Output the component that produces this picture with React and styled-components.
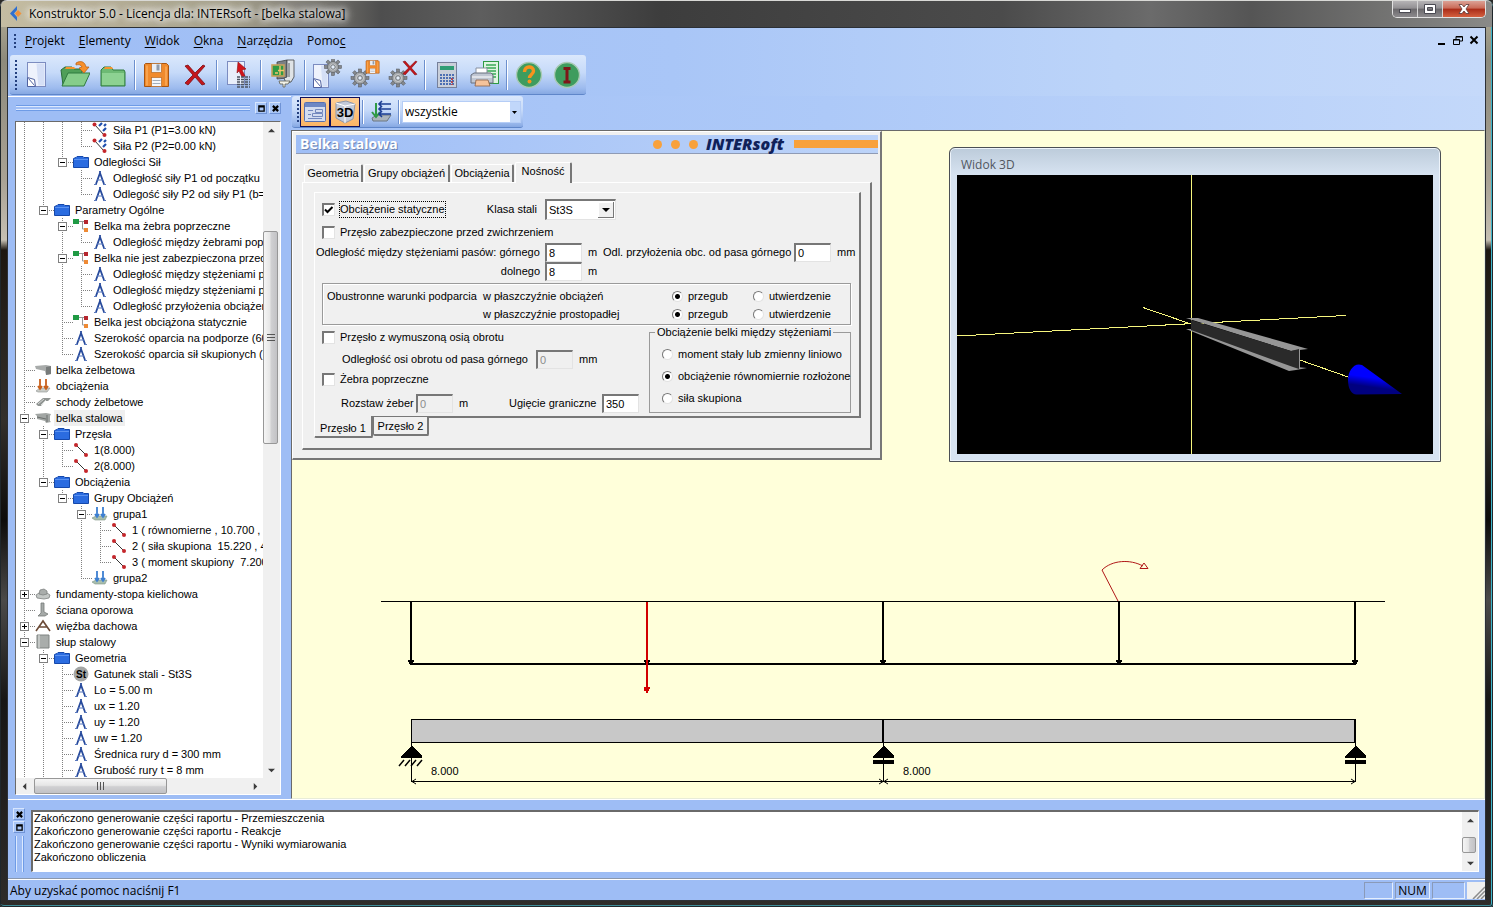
import React, { useState } from 'react';
import styled, { createGlobalStyle, css } from 'styled-components';

const GlobalStyle = createGlobalStyle`
  * { box-sizing: border-box; }
  body { margin: 0; background: #2b2a28; }
  button, input, select { font: inherit; color: inherit; margin: 0; }
`;

const uiFont = css`
  font-family: 'Open Sans', 'Noto Sans', sans-serif;
  font-size: 12px;
`;

const smallFont = css`
  font-family: 'Liberation Sans', Arial, sans-serif;
  font-size: 11px;
  line-height: 13px;
`;

/* ---------- window frame ---------- */

const Frame = styled.div`
  min-height: 100vh;
  display: flex;
  flex-direction: column;
  padding: 0 7px 6px 7px;
  color: #000;
  border-radius: 7px 7px 4px 4px;
  box-shadow: inset 0 0 0 1px #20272b, inset -2px 0 0 #3fb6cb, inset 0 -2px 0 #3e8c98, inset 0 2px 0 #d8d8d0;
  background: linear-gradient(180deg, #b9b29a 0, #8d8a7c 60px, #a9a294 180px, #c5bfb2 240px, #1d1711 250px, #33302c 420px, #0d0c0b 520px, #4b4a49 600px, #171615 700px, #2e2c2a 100%);
  ${uiFont}
`;

const TitleBar = styled.header`
  height: 27px;
  margin: 0 -6px;
  padding: 0 6px 0 8px;
  display: flex;
  align-items: flex-start;
  gap: 6px;
  border-radius: 6px 6px 0 0;
  border-top: 1px solid #d9d9d6;
  background: linear-gradient(90deg, #c5bda2 0, #b3ac94 120px, #a5a08c 230px, #7d7b74 310px, #4e4e4e 380px, #5e5e5e 480px, #3d3d3d 660px, #4b4b4b 1000px, #6b6b6b 1150px, #555 1250px, #8a8a88 100%);
`;

const TitleText = styled.h1`
  flex: 1;
  margin: 0;
  font-size: 12px;
  font-weight: 400;
  line-height: 25px;
  white-space: nowrap;
  text-shadow: 0 0 6px #fff, 0 0 8px #fff, 0 0 10px #eee, 0 0 12px #ddd;
`;

const LogoBox = styled.span`
  display: flex;
  padding-top: 5px;
`;

const Captions = styled.div`
  display: flex;
  height: 17px;
  border: 1px solid #e2e2e2;
  border-top: 0;
  border-radius: 0 0 5px 5px;
  overflow: hidden;
`;

const CaptionButton = styled.button`
  width: ${(p) => (p.$close ? 42 : 25)}px;
  padding: 0;
  border: 0;
  border-right: ${(p) => (p.$close ? 0 : '1px solid #d5d5d5')};
  display: flex;
  align-items: center;
  justify-content: center;
  background: ${(p) =>
    p.$close
      ? 'linear-gradient(180deg, #dba195 0, #c96a57 45%, #a92c18 50%, #d4603f 100%)'
      : 'linear-gradient(180deg, #b5b3b5 0, #929093 45%, #6a686b 50%, #8c8a8d 100%)'};
`;

const Client = styled.div`
  flex: 1;
  display: flex;
  flex-direction: column;
  border: 1px solid #2c3036;
  background: #9ebdf5;
`;

const TopArea = styled.div`
  background: linear-gradient(90deg, #9ebdf5 0, #a9c6f7 45%, #bcd4f9 75%, #c5d9fa 100%);
`;

const MenuBar = styled.nav`
  height: 26px;
  display: flex;
  align-items: center;
  padding: 0 4px 0 6px;
  gap: 14px;
`;

const Grip = styled.span`
  width: 2px;
  height: ${(p) => p.$h}px;
  flex: none;
  margin-right: 1px;
  background: repeating-linear-gradient(180deg, #24407e 0 2px, transparent 2px 4px);
`;

const MenuItem = styled.button`
  padding: 0;
  border: 0;
  background: none;
  line-height: 18px;
  u { text-underline-offset: 2px; }
  &:first-of-type { margin-left: -6px; }
`;

const MdiButtons = styled.div`
  margin: 0 0 3px auto;
  display: flex;
  gap: 2px;
`;

const MdiButton = styled.button`
  width: 14px;
  height: 14px;
  padding: 0;
  border: 0;
  background: none;
  display: flex;
  align-items: center;
  justify-content: center;
`;

const ToolRow = styled.div`
  height: 42px;
  padding: 1px 2px 0;
`;

const ToolStrip = styled.div`
  display: inline-flex;
  align-items: center;
  height: ${(p) => p.$h}px;
  padding-left: 5px;
  border-radius: 3px;
  border-bottom: 1px solid #5f86c9;
  background: linear-gradient(180deg, #dbe8fc 0, #c6daf9 45%, #9dbbee 85%, #86a8e2 100%);
`;

const ToolButton = styled.button`
  width: 38px;
  height: 34px;
  padding: 0;
  border: 0;
  background: none;
  display: flex;
  align-items: center;
  justify-content: center;
`;

const ToolSep = styled.span`
  width: 2px;
  height: ${(p) => p.$h}px;
  margin: 0 2px;
  background: linear-gradient(90deg, #6c8fce 50%, #fff 50%);
`;

/* ---------- left tree ---------- */

const Main = styled.div`
  flex: 1;
  display: flex;
`;

const Sidebar = styled.aside`
  width: 283px;
  flex: none;
  padding: 4px 10px 3px 7px;
  border-top: 1px solid #fff;
  display: flex;
  flex-direction: column;
`;

const PanelHead = styled.div`
  height: 20px;
  padding: 0 0 6px 1px;
  display: flex;
  align-items: center;
  gap: 2px;
`;

const DragLines = styled.span`
  flex: 1;
  height: 6px;
  margin-right: 3px;
  border: solid #6e9be6;
  border-width: 1px 0;
  box-shadow: inset 0 1px 0 #dce9ff, inset 0 -1px 0 #dce9ff;
`;

const MiniButton = styled.button`
  width: 12px;
  height: 12px;
  padding: 0;
  display: flex;
  align-items: center;
  justify-content: center;
  border: 1px solid;
  border-color: #d7e5fd #6f93d6 #6f93d6 #d7e5fd;
  background: #a9c6f7;
`;

const TreeBox = styled.div`
  border: 1px solid;
  border-color: #6a6a6a #fff #fff #6a6a6a;
  background: #fff;
  display: grid;
  grid-template-columns: 1fr 17px;
  grid-template-rows: 1fr 16px;
`;

const TreeView = styled.ul`
  margin: 0;
  padding: 0;
  list-style: none;
  overflow: hidden;
  min-width: 0;
  ${smallFont}
`;

const TreeRow = styled.li`
  display: flex;
  align-items: center;
  height: 16px;
  white-space: pre;
  svg { flex: none; display: block; }
`;

const Expander = styled.button`
  width: 19px;
  height: 16px;
  flex: none;
  padding: 0;
  border: 0;
  background: none;
`;

const TreeLabel = styled.span`
  margin-left: 3px;
  padding: 2px 2px 1px;
  background: ${(p) => (p.$on ? '#efefef' : 'transparent')};
`;

const ScrollBar = styled.div`
  display: flex;
  flex-direction: ${(p) => (p.$row ? 'row' : 'column')};
  background: #f0f0f0;
`;

const ScrollArrow = styled.button`
  width: 16px;
  height: 16px;
  flex: none;
  padding: 0;
  border: 0;
  background: none;
  display: flex;
  align-items: center;
  justify-content: center;
`;

const Space = styled.span`
  flex: ${(p) => p.$grow} 0 0;
`;

const Thumb = styled.span`
  flex: ${(p) => p.$grow} 0 0;
  display: flex;
  align-items: center;
  justify-content: center;
  margin: ${(p) => (p.$row ? '0' : '0 2px 0 0')};
  border: 1px solid #979797;
  border-radius: 2px;
  background: linear-gradient(${(p) => (p.$row ? 180 : 90)}deg, #f5f5f5 0, #e6e6e6 45%, #d0d0d2 55%, #c2c2c5 100%);
`;

/* ---------- workspace ---------- */

const Work = styled.section`
  flex: 1;
  min-width: 0;
  display: flex;
  flex-direction: column;
`;

const SubTools = styled.div`
  height: 34px;
  padding: 0 3px 0 1px;
  background: linear-gradient(90deg, #a3c1f6 0, #adc9f8 45%, #c3d8fa 100%);
`;

const FlagButton = styled.button`
  width: 30px;
  height: 30px;
  padding: 0;
  display: flex;
  align-items: center;
  justify-content: center;
  border: ${(p) => (p.$on ? '1px solid #10105c' : '0')};
  background: ${(p) => (p.$on ? 'linear-gradient(180deg, #ffcf94 0, #fcb565 100%)' : 'none')};
`;

const Combo = styled.span`
  position: relative;
  display: inline-flex;
  svg { position: absolute; pointer-events: none; }
`;

const FilterCombo = styled(Combo)`
  margin-right: 2px;
  select {
    appearance: none;
    width: 119px;
    height: 22px;
    padding: 0 14px 0 2px;
    border: 1px solid #b5cdf6;
    border-radius: 0;
    background: linear-gradient(90deg, transparent 107px, #c1d7fa 107px) #fff;
    ${uiFont}
  }
  svg { right: 4px; top: 10px; }
`;

const Canvas = styled.div`
  flex: 1;
  border: 1px solid;
  border-color: #6a6a6a #e8ecd8 #e8ecd8 #6a6a6a;
  background: #ffffda;
`;

const Floating = styled.div`
  display: flex;
  justify-content: space-between;
  align-items: flex-start;
`;

const Dialog = styled.form`
  width: 590px;
  flex: none;
  padding: 3px 2px 8px 3px;
  border: solid;
  border-width: 1px 2px 2px 1px;
  border-color: #fff #777 #777 #fff;
  background: #f0f0f0;
  ${smallFont}
`;

const DialogTitle = styled.div`
  height: 19px;
  display: flex;
  align-items: center;
  padding-left: 4px;
  border-bottom: 1px solid #8f9bb5;
  background: linear-gradient(90deg, #9fbef6 0, #bcd3f9 100%);
`;

const DialogName = styled.h2`
  flex: 1;
  margin: 0;
  color: #fff;
  font: 700 14px/18px 'Open Sans', 'Noto Sans', sans-serif;
  text-shadow: 1px 1px 0 #6d84ae;
`;

const Dots = styled.span`
  display: flex;
  gap: 9px;
  margin-right: 8px;
  i {
    width: 9px;
    height: 9px;
    border-radius: 50%;
    background: #f8a13c;
  }
`;

const Brand = styled.span`
  width: 88px;
  color: #10215a;
  font: italic 800 16px/18px 'Open Sans', 'Noto Sans', sans-serif;
`;

const BrandBar = styled.span`
  width: 84px;
  height: 8px;
  background: #f8a13c;
`;

const Tabs = styled.div`
  display: flex;
  align-items: flex-end;
  gap: 1px;
  height: 28px;
  padding-left: 8px;
`;

const Tab = styled.button`
  position: relative;
  height: ${(p) => (p.$on ? 21 : 18)}px;
  width: ${(p) => p.$w}px;
  margin-bottom: ${(p) => (p.$on ? -1 : 0)}px;
  padding: 0 0 ${(p) => (p.$on ? 3 : 1)}px;
  white-space: nowrap;
  border: solid;
  border-width: 1px 2px 0 1px;
  border-color: #fff #777 #777 #fff;
  border-radius: 2px 2px 0 0;
  background: #f0f0f0;
`;

const Page = styled.div`
  margin: 0 6px 0 6px;
  padding: 9px 9px 10px 11px;
  border: solid;
  border-width: 1px 2px 2px 1px;
  border-color: #fff #777 #777 #fff;
`;

const SpanPage = styled.div`
  height: 226px;
  padding: 4px 8px 2px 1px;
  border: solid;
  border-width: 1px 2px 2px 1px;
  border-color: #fff #777 #777 #fff;
`;

const SpanTabs = styled.div`
  display: flex;
  align-items: flex-start;
  height: 20px;
`;

const SpanTab = styled.button`
  position: relative;
  width: ${(p) => p.$w}px;
  height: ${(p) => (p.$on ? 22 : 19)}px;
  margin-top: ${(p) => (p.$on ? -2 : -1)}px;
  padding: ${(p) => (p.$on ? '4px 0 0' : '2px 0 0')};
  white-space: nowrap;
  border: solid;
  border-width: 0 2px 2px 1px;
  border-color: #fff #777 #777 ${(p) => (p.$on ? '#fff' : '#777')};
  border-radius: 0 0 2px 2px;
  background: #f0f0f0;
`;

const Row = styled.div`
  display: flex;
  align-items: center;
  height: ${(p) => p.$h}px;
  padding-left: ${(p) => p.$in || 0}px;
`;

const Cell = styled.label`
  width: ${(p) => p.$w}px;
  flex: none;
  white-space: nowrap;
  text-align: ${(p) => (p.$right ? 'right' : 'left')};
`;

const sunken = css`
  border: solid;
  border-width: 2px 1px 1px 2px;
  border-color: #777 #e3e3e3 #e3e3e3 #777;
`;

const NumField = styled.input`
  width: 37px;
  height: 19px;
  flex: none;
  padding: 0 0 0 2px;
  border-radius: 0;
  ${sunken}
  background: #fff;
  &:disabled { background: #f0f0f0; color: #8c8c8c; }
`;

const Unit = styled.span`
  width: ${(p) => p.$w}px;
  flex: none;
  padding-left: 6px;
`;

const CheckLabel = styled.label`
  display: flex;
  align-items: center;
  gap: 4px;
  width: ${(p) => p.$w || 240}px;
  flex: none;
  white-space: nowrap;
  input {
    appearance: none;
    flex: none;
    width: 13px;
    height: 13px;
    ${sunken}
    background: #fff;
  }
  input:checked {
    background: #fff url("data:image/svg+xml,%3Csvg xmlns='http://www.w3.org/2000/svg' width='10' height='10'%3E%3Cpath d='M1 4.5L3.5 7L8.500 2' fill='none' stroke='black' stroke-width='2'/%3E%3C/svg%3E") center no-repeat;
  }
  span {
    padding: 1px 0;
    border: 1px ${(p) => (p.$focus ? 'dotted #000' : 'solid transparent')};
  }
`;

const RadioLabel = styled.label`
  display: flex;
  align-items: center;
  gap: 5px;
  width: ${(p) => p.$w}px;
  flex: none;
  white-space: nowrap;
  input {
    appearance: none;
    flex: none;
    width: 11px;
    height: 11px;
    border: 1px solid;
    border-color: #777 #e3e3e3 #e3e3e3 #777;
    border-radius: 50%;
    background: #fff;
  }
  input:checked { background: radial-gradient(circle, #000 0 2px, #fff 3px); }
`;

const SteelCombo = styled(Combo)`
  margin-left: 8px;
  select {
    appearance: none;
    width: 71px;
    height: 21px;
    padding: 0 18px 0 2px;
    border-radius: 0;
    ${sunken}
    background: #fff;
  }
  svg { right: 2px; top: 3px; }
`;

const Supports = styled.div`
  margin: 2px 0 0 6px;
  height: 42px;
  padding: 3px 0 0 4px;
  border: 1px solid #9a9a9a;
  box-shadow: 1px 1px 0 #fff, inset 1px 1px 0 #fff;
`;

const Lower = styled.div`
  display: flex;
  justify-content: space-between;
  padding-left: 6px;
`;

const LoadKind = styled.fieldset`
  width: 202px;
  height: 87px;
  margin: 1px 0 0;
  padding: 4px 0 0 12px;
  border: 1px solid #9a9a9a;
  legend {
    margin-left: -7px;
    padding: 0 2px;
    line-height: 13px;
    white-space: nowrap;
  }
`;

const View3D = styled.section`
  width: 492px;
  flex: none;
  margin: 16px 43px 0 0;
  padding: 0 7px 7px;
  border: 1px solid #4b4f55;
  border-radius: 6px 6px 0 0;
  background: linear-gradient(180deg, #bccbda 0, #d7e3f1 27px);
  box-shadow: inset 0 0 0 1px #eef4fb;
  h2 {
    margin: 0;
    padding: 4px 0 0 4px;
    height: 27px;
    color: #51575f;
    font-size: 12px;
    font-weight: 400;
    line-height: 26px;
  }
  svg { display: block; width: 100%; background: #000; }
`;

const Diagram = styled.svg`
  display: block;
  width: 100%;
  font-family: 'Liberation Sans', Arial, sans-serif;
  font-size: 11px;
`;

/* ---------- bottom ---------- */

const Output = styled.section`
  height: 80px;
  display: flex;
  gap: 4px;
  padding: 8px 6px 6px 4px;
  border-top: 1px solid #fff;
  border-bottom: 1px solid #8a97ad;
`;

const OutputSide = styled.div`
  width: 14px;
  margin-right: 1px;
  display: flex;
  flex-direction: column;
  align-items: center;
  gap: 1px;
  &::after {
    content: '';
    flex: 1;
    width: 7px;
    margin-top: 2px;
    border: solid #6e9be6;
    border-width: 0 1px;
    box-shadow: inset 1px 0 0 #dce9ff, inset -1px 0 0 #dce9ff;
  }
`;

const Log = styled.div`
  flex: 1;
  display: flex;
  margin-top: 2px;
  border: solid;
  border-width: 2px 1px 1px 2px;
  border-color: #6a6a6a #fff #fff #6a6a6a;
  background: #fff;
  ${smallFont}
  p { margin: 0; padding-left: 1px; }
`;

const LogLines = styled.div`
  flex: 1;
`;

const Status = styled.footer`
  height: 21px;
  display: flex;
  align-items: center;
  gap: 2px;
  padding-left: 2px;
  border-top: 1px solid #fff;
  p { flex: 1; margin: 0; padding-top: 2px; line-height: 18px; }
`;

const Pane = styled.span`
  width: ${(p) => p.$w}px;
  height: 17px;
  line-height: 16px;
  text-align: center;
  border: 1px solid;
  border-color: #8a9ab8 #e4eefd #e4eefd #8a9ab8;
`;

/* ---------- icons ---------- */

const gearTeeth = [0, 45, 90, 135, 180, 225, 270, 315];

function Gear({ x, y, r = 6 }) {
  return (
    <g transform={`translate(${x} ${y})`}>
      {gearTeeth.map((a) => (
        <rect key={a} x="-1.500" y={-r - 3} width="3" height="5" fill="#85888c" stroke="#505357" strokeWidth="0.5" transform={`rotate(${a})`} />
      ))}
      <circle r={r} fill="#a5a8ab" stroke="#606468" strokeWidth="0.8" />
      <circle r={r - 2.5} fill="none" stroke="#c9ccce" strokeWidth="1" />
      <circle r="2.200" fill="#e4edf8" stroke="#606468" strokeWidth="0.8" />
    </g>
  );
}

function Sheet({ x = 0, y = 0, w = 18, h = 24 }) {
  return (
    <g transform={`translate(${x} ${y})`}>
      <rect width={w} height={h} fill="#eef2fc" stroke="#7c8cc0" />
      <path d={`M${w * 0.5} 1H${w - 1}V${h - 1}H${w * 0.6}Z`} fill="#d5dff6" />
      <path d={`M0 ${h - 9}L7 ${h - 7}L8 ${h}H0Z`} fill="#fff" stroke="#5062a0" />
      <path d={`M1 ${h - 8}L7 ${h - 1}`} stroke="#5062a0" />
    </g>
  );
}

function Floppy({ x, y, s = 1 }) {
  return (
    <g transform={`translate(${x} ${y}) scale(${s})`}>
      <path d="M1 1H22L24 3V24H0V2Z" fill="#f08a2c" stroke="#a85512" />
      <rect x="7" y="1" width="10" height="9" fill="#e9eef6" stroke="#b76a24" strokeWidth="0.7" />
      <path d="M12 2h3v6h-3z" fill="#8f9aaa" />
      <path d="M2.500 3v20M21.500 4v19" stroke="#ffb566" strokeWidth="1.200" />
      <rect x="7" y="15" width="10" height="9" fill="#f5f7fb" stroke="#b76a24" strokeWidth="0.7" />
      <path d="M8 18h8M8 21h8" stroke="#a3adba" />
    </g>
  );
}

function Cross({ x, y, s = 1 }) {
  return (
    <g transform={`translate(${x} ${y}) scale(${s})`}>
      <path d="M0 1L3 0L10 8L18 0L20 1L12 10L20 19L17 20L10 12L3 20L0 18L8 10Z" fill="#c4161c" stroke="#7e0c10" strokeWidth="0.8" />
    </g>
  );
}

const toolIcons = {
  new: <Sheet x={5.5} y={3.5} />,
  open: (
    <g>
      <path d="M1 11L5 8H12L14 10H22V26H3Z" fill="#4f9f58" stroke="#2a6d38" />
      <path d="M6 8h8l2 2H5z" fill="#f3932f" />
      <path d="M8 14H30L24 27H2Z" fill="#86cd8a" stroke="#2f7a3e" />
      <path d="M16 4C21 1 25 3 26 8L29 8L24 14L19 9L22 8C21 6 19 5 16 6Z" fill="#f78f2c" stroke="#b55c10" strokeWidth="0.7" />
    </g>
  ),
  folder: (
    <g>
      <path d="M3 11L6 8H13L15 11H26L27 13V27H3Z" fill="#6dba74" stroke="#2f7a3e" />
      <path d="M7 8h7l1 2H6z" fill="#f3932f" />
      <path d="M4 14H26V26H4Z" fill="#8dd292" />
    </g>
  ),
  save: <Floppy x={2.5} y={3.5} />,
  remove: <Cross x={5} y={6} />,
  select: (
    <g>
      <rect x="3.500" y="2.500" width="17" height="23" fill="#e9effb" stroke="#7c8cc0" />
      <path d="M14 3L22 10L18 11L21 17L18 18L15 12L13 14Z" fill="#d3141b" stroke="#8c0d10" strokeWidth="0.6" />
      <path d="M13 18h13M13 20.500h13M13 23h13M13 25.500h13M13 28h13" stroke="#4c5360" strokeWidth="1.400" strokeDasharray="3 1" />
    </g>
  ),
  pack: (
    <g>
      <path d="M9 3L19 1V19L9 20Z" fill="#7b8084" stroke="#3f4346" strokeWidth="0.8" />
      <path d="M19 1H26V18L23 23L18 24L16 19L19 18Z" fill="#dfe3e6" stroke="#3f4346" strokeWidth="0.8" />
      <path d="M21 4v14" stroke="#9aa0a4" strokeWidth="2" />
      <rect x="4" y="6" width="12" height="11" fill="#2f9a44" stroke="#c9a35e" strokeWidth="1.600" />
      <path d="M10 11.500h6M12 7v9M7 14h3" stroke="#f2c46c" strokeWidth="1.400" />
      <path d="M11 22h11l-2 3h-3v3h-2v-3h-3z" fill="#f2f2e8" stroke="#5c5c50" strokeWidth="0.8" />
    </g>
  ),
  docGear: (
    <g>
      <Sheet x={1.5} y={5.5} w={15} h={23} />
      <Gear x={21} y={8} r={5.5} />
    </g>
  ),
  gearSave: (
    <g>
      <Gear x={10} y={19} r={6} />
      <Floppy x={16} y={1} s={0.55} />
    </g>
  ),
  gearRemove: (
    <g>
      <Gear x={10} y={19} r={6} />
      <Cross x={15} y={2} s={0.7} />
    </g>
  ),
  calc: (
    <g>
      <rect x="5.500" y="3.500" width="19" height="25" fill="#c9cfda" stroke="#76809a" />
      <rect x="8" y="7" width="14" height="4" fill="#2f9d74" />
      <path d="M8 16h14M8 19h14M8 22h14M8 25h14" stroke="#4d6fb3" strokeWidth="2" strokeDasharray="2 1" />
      <path d="M20 19v7" stroke="#b04a55" strokeWidth="2" strokeDasharray="2 1" />
    </g>
  ),
  print: (
    <g>
      <rect x="13.500" y="2.500" width="15" height="22" fill="#dff5e0" stroke="#2f9a44" />
      <path d="M16 6h10M16 9h10M16 12h10M16 15h10M16 18h10" stroke="#39a957" strokeWidth="1.400" />
      <path d="M6 16V9H17V16Z" fill="#fff" stroke="#8790a0" />
      <path d="M1 16L4 14H21L23 16V24H1Z" fill="#bfc6d2" stroke="#68707e" />
      <path d="M2 18h20" stroke="#fff" />
      <path d="M6 21H18L20 27H5Z" fill="#f5c39b" stroke="#8b5f44" strokeWidth="0.8" />
    </g>
  ),
  help: (
    <g>
      <circle cx="15" cy="16" r="12.500" fill="#3e9c5e" stroke="#a9c9b5" strokeWidth="1.400" />
      <path d="M10.500 13C10.500 6.500 19.500 6.500 19.500 12C19.500 15.500 15.500 15.500 15.500 19" fill="none" stroke="#f8931d" strokeWidth="3.400" />
      <circle cx="15.500" cy="22.500" r="2" fill="#f8931d" />
    </g>
  ),
  info: (
    <g>
      <circle cx="15" cy="16" r="12.500" fill="#3e9c5e" stroke="#a9c9b5" strokeWidth="1.400" />
      <path d="M11.500 9.500h7M11.500 23h7M15 9v14" stroke="#7e1518" strokeWidth="3" />
    </g>
  ),
};

function ToolIcon({ name }) {
  return (
    <svg width="30" height="31" viewBox="0 0 30 31" aria-hidden="true">
      {toolIcons[name]}
    </svg>
  );
}

const treeIcons = {
  force: (
    <g>
      <path d="M3 3L12 13" stroke="#333" />
      <path d="M7 4l3-3M11 9l3-3M12 4l2-2" stroke="#1f4fae" strokeWidth="2.200" />
      <circle cx="2.500" cy="2.500" r="2" fill="#c4262b" />
      <circle cx="12.500" cy="13" r="2" fill="#c4262b" />
    </g>
  ),
  seg: (
    <g>
      <path d="M3 3L13 13" stroke="#333" />
      <circle cx="3" cy="3" r="2" fill="#c4262b" />
      <circle cx="13" cy="13" r="2" fill="#c4262b" />
    </g>
  ),
  folder: (
    <g>
      <path d="M0.500 4.500L3 3.500L4 2.500H10L11 3.500H15.500V13.500H0.500Z" fill="#2b6ce0" stroke="#1548ab" />
      <path d="M1 5.500h14" stroke="#5b92f0" />
    </g>
  ),
  param: (
    <g>
      <path d="M8 1V4M8 3L4 14M8 3L12 14" fill="none" stroke="#274a9c" strokeWidth="1.800" />
      <path d="M5 10h6M2 14.500h3M11 14.500h3" stroke="#5a79bd" />
    </g>
  ),
  struct: (
    <g>
      <path d="M6 3.500h5M9.500 4v7h2" stroke="#999" fill="none" />
      <rect x="0" y="1" width="6" height="5" fill="#1f9a44" />
      <rect x="11" y="2" width="4" height="4" fill="#b5262e" />
      <rect x="11" y="10" width="4" height="4" fill="#ee8a35" />
    </g>
  ),
  beam: (
    <g>
      <path d="M0 4L11 3L16 4V12L11 13L10 9L1 7Z" fill="#a8abaa" />
      <path d="M11 5L16 4V12L11 13Z" fill="#777b7a" />
    </g>
  ),
  loads: (
    <g>
      <path d="M1 13L5 10H15L12 14H3Z" fill="#c9cdca" stroke="#8b8f8c" strokeWidth="0.6" />
      <path d="M5 1v9M11 1v9M3 8l2 3 2-3M9 8l2 3 2-3" fill="none" stroke="#c8601c" strokeWidth="1.800" />
    </g>
  ),
  group: (
    <g>
      <path d="M0 12L4 10H15L13 14H3Z" fill="#a9bfae" stroke="#7f9484" strokeWidth="0.6" />
      <path d="M5 1v9M11 1v9M3 8l2 3 2-3M9 8l2 3 2-3" fill="none" stroke="#3d7fd1" strokeWidth="1.800" />
    </g>
  ),
  stairs: (
    <g>
      <path d="M1 10L8 4H16L13 7H10L6 12H3Z" fill="#8f9391" />
      <path d="M3 10L9 5M6 11L11 6" stroke="#d7dad8" />
    </g>
  ),
  steel: (
    <g>
      <path d="M0 4L11 3L16 4L15 6V11L16 12L11 13L10 11L2 9V6Z" fill="#a2a6a4" />
      <path d="M2 7L11 9M12 5v7" stroke="#6a6e6c" />
    </g>
  ),
  footing: (
    <g>
      <path d="M1 9L4 7L12 7L15 9L14 12L9 13L2 12Z" fill="#c3c7c5" stroke="#7f8381" strokeWidth="0.8" />
      <path d="M4 8L5 4L9 3L12 5V8L8 9Z" fill="#a9adab" stroke="#7f8381" strokeWidth="0.8" />
    </g>
  ),
  wall: <path d="M6 1H9V10L13 12L10 14H3L6 11Z" fill="#a6aaa8" stroke="#747876" strokeWidth="0.8" />,
  truss: <path d="M1 13L8 3L15 13M4 9h8" fill="none" stroke="#6b4a36" strokeWidth="1.600" />,
  column: (
    <g>
      <path d="M2 1H14V14H2Z" fill="#a9adab" stroke="#7f8381" />
      <path d="M4 1v13" stroke="#dfe2e0" />
    </g>
  ),
  steelMark: (
    <g>
      <circle cx="8" cy="8" r="7.500" fill="#a4a6a5" />
      <text x="8" y="12" textAnchor="middle" fontSize="10" fontWeight="700">St</text>
    </g>
  ),
};

const miniGlyphs = {
  max: <path d="M1 1h6v6h-6zM1 2h6" fill="none" stroke="#000" strokeWidth="1.500" />,
  close: <path d="M1 1l6 6M7 1l-6 6" stroke="#000" strokeWidth="2.500" />,
};

function MiniGlyph({ name }) {
  return (
    <svg width="7" height="7" viewBox="0 0 8 8" aria-hidden="true">
      {miniGlyphs[name]}
    </svg>
  );
}

const arrowPaths = {
  up: 'M0 6L4 2L8 6Z',
  down: 'M0 2L4 6L8 2Z',
  left: 'M6 0L2 4L6 8Z',
  right: 'M2 0L6 4L2 8Z',
};

function Arrow({ dir }) {
  return (
    <ScrollArrow type="button" aria-label={dir}>
      <svg width="7" height="7" viewBox="0 0 8 8" aria-hidden="true">
        <path d={arrowPaths[dir]} fill="#3c3c3c" />
      </svg>
    </ScrollArrow>
  );
}

/* ---------- tree data ---------- */

// one char per level: | line, T tee, L last, - / _ open node (more below / last), + closed node
const treeRows = [
  ['|||T', 'force', 'Siła P1 (P1=3.00 kN)'],
  ['|||L', 'force', 'Siła P2 (P2=0.00 kN)'],
  ['||_', 'folder', 'Odległości Sił'],
  ['|| T', 'param', 'Odległość siły P1 od początku'],
  ['|| L', 'param', 'Odlegość siły P2 od siły P1 (b='],
  ['|_', 'folder', 'Parametry Ogólne'],
  ['| -', 'struct', 'Belka ma żebra poprzeczne'],
  ['| |L', 'param', 'Odległość między żebrami poprz'],
  ['| -', 'struct', 'Belka nie jest zabezpieczona przed'],
  ['| |T', 'param', 'Odległość między stężeniami pa'],
  ['| |T', 'param', 'Odległość między stężeniami pa'],
  ['| |L', 'param', 'Odległość przyłożenia obciążen'],
  ['| T', 'struct', 'Belka jest obciążona statycznie'],
  ['| T', 'param', 'Szerokość oparcia na podporze (60'],
  ['| L', 'param', 'Szerokość oparcia sił skupionych (1'],
  ['T', 'beam', 'belka żelbetowa'],
  ['T', 'loads', 'obciążenia'],
  ['T', 'stairs', 'schody żelbetowe'],
  ['-', 'steel', 'belka stalowa'],
  ['|-', 'folder', 'Przęsła'],
  ['||T', 'seg', '1(8.000)'],
  ['||L', 'seg', '2(8.000)'],
  ['|_', 'folder', 'Obciążenia'],
  ['| _', 'folder', 'Grupy Obciążeń'],
  ['|  -', 'group', 'grupa1'],
  ['|  |T', 'seg', '1 ( równomierne , 10.700 , 0'],
  ['|  |T', 'seg', '2 ( siła skupiona  15.220 , 4'],
  ['|  |L', 'seg', '3 ( moment skupiony  7.200'],
  ['|  L', 'group', 'grupa2'],
  ['+', 'footing', 'fundamenty-stopa kielichowa'],
  ['T', 'wall', 'ściana oporowa'],
  ['+', 'truss', 'więźba dachowa'],
  ['-', 'column', 'słup stalowy'],
  ['|-', 'folder', 'Geometria'],
  ['||T', 'steelMark', 'Gatunek stali - St3S'],
  ['||T', 'param', 'Lo = 5.00 m'],
  ['||T', 'param', 'ux = 1.20'],
  ['||T', 'param', 'uy = 1.20'],
  ['||T', 'param', 'uw = 1.20'],
  ['||T', 'param', 'Średnica rury d = 300 mm'],
  ['||T', 'param', 'Grubość rury t = 8 mm'],
];

function Guide({ kind }) {
  const down = '|T-+'.includes(kind);
  const node = '-_+'.includes(kind);
  const art = (
    <svg width="19" height="16" viewBox="0 0 19 16" shapeRendering="crispEdges" aria-hidden="true">
      {kind !== ' ' && (
        <path d={`M8.500 0V${down ? 16 : 9}`} stroke="#808080" strokeDasharray="1 1" />
      )}
      {'TL-_+'.includes(kind) && <path d="M8 8.500H19" stroke="#808080" strokeDasharray="1 1" />}
      {node && <rect x="4.500" y="4.500" width="8" height="8" fill="#fff" stroke="#808080" />}
      {node && <path d="M6 8.500H11" stroke="#000" />}
      {kind === '+' && <path d="M8.500 6V11" stroke="#000" />}
    </svg>
  );
  return node ? <Expander type="button" aria-label="node">{art}</Expander> : art;
}

function Tree() {
  return (
    <TreeView>
      {treeRows.map(([guides, icon, label], i) => (
        <TreeRow key={i}>
          {guides.split('').map((kind, n) => (
            <Guide key={n} kind={kind} />
          ))}
          <svg width="16" height="16" viewBox="0 0 16 16" aria-hidden="true">
            {treeIcons[icon]}
          </svg>
          <TreeLabel $on={label === 'belka stalowa'}>{label}</TreeLabel>
        </TreeRow>
      ))}
    </TreeView>
  );
}

/* ---------- form ---------- */

function Check({ label, on, focus, w }) {
  return (
    <CheckLabel $focus={focus} $w={w}>
      <input type="checkbox" defaultChecked={on} />
      <span>{label}</span>
    </CheckLabel>
  );
}

function Radio({ name, label, on, w }) {
  return (
    <RadioLabel $w={w}>
      <input type="radio" name={name} defaultChecked={on} />
      {label}
    </RadioLabel>
  );
}

function BeamDialog() {
  return (
    <Dialog>
      <DialogTitle>
        <DialogName>Belka stalowa</DialogName>
        <Dots><i /><i /><i /></Dots>
        <Brand>INTERsoft</Brand>
        <BrandBar />
      </DialogTitle>
      <Tabs>
        <Tab type="button" $w={59}>Geometria</Tab>
        <Tab type="button" $w={86}>Grupy obciążeń</Tab>
        <Tab type="button" $w={63}>Obciążenia</Tab>
        <Tab type="button" $w={57} $on>Nośność</Tab>
      </Tabs>
      <Page>
        <SpanPage>
          <Row $h={25} $in={6}>
            <Check label="Obciążenie statyczne" on focus w={124} />
            <Cell $w={91} $right htmlFor="steel">Klasa stali</Cell>
            <SteelCombo>
              <select id="steel" defaultValue="St3S"><option>St3S</option></select>
              <svg width="16" height="16" viewBox="0 0 16 16" aria-hidden="true">
                <rect width="16" height="16" fill="#777" />
                <rect width="15" height="15" fill="#fff" />
                <rect x="1" y="1" width="14" height="14" fill="#f0f0f0" />
                <path d="M4 6h8l-4 4z" fill="#000" />
              </svg>
            </SteelCombo>
          </Row>
          <Row $h={21} $in={6}>
            <Check label="Przęsło zabezpieczone przed zwichrzeniem" />
          </Row>
          <Row $h={19}>
            <Cell $w={229} htmlFor="upper">Odległość między stężeniami pasów: górnego</Cell>
            <NumField id="upper" defaultValue="8" />
            <Unit $w={21}>m</Unit>
            <Cell $w={191} htmlFor="offset">Odl. przyłożenia obc. od pasa górnego</Cell>
            <NumField id="offset" defaultValue="0" />
            <Unit $w={25}>mm</Unit>
          </Row>
          <Row $h={19}>
            <Cell $w={224} $right htmlFor="lower">dolnego</Cell>
            <Row $h={19} $in={5}>
              <NumField id="lower" defaultValue="8" />
              <Unit $w={21}>m</Unit>
            </Row>
          </Row>
          <Supports>
            <Row $h={18}>
              <Cell as="span" $w={156}>Obustronne warunki podparcia</Cell>
              <Cell as="span" $w={189}>w płaszczyźnie obciążeń</Cell>
              <Radio name="inPlane" label="przegub" on w={81} />
              <Radio name="inPlane" label="utwierdzenie" w={85} />
            </Row>
            <Row $h={18}>
              <Cell as="span" $w={156} />
              <Cell as="span" $w={189}>w płaszczyźnie prostopadłej</Cell>
              <Radio name="outPlane" label="przegub" on w={81} />
              <Radio name="outPlane" label="utwierdzenie" w={85} />
            </Row>
          </Supports>
          <Lower>
            <div>
              <Row $h={24}>
                <Check label="Przęsło z wymuszoną osią obrotu" />
              </Row>
              <Row $h={20} $in={20}>
                <Cell $w={194} htmlFor="axis">Odległość osi obrotu od pasa górnego</Cell>
                <NumField id="axis" defaultValue="0" disabled />
                <Unit $w={25}>mm</Unit>
              </Row>
              <Row $h={20}>
                <Check label="Żebra poprzeczne" />
              </Row>
              <Row $h={28} $in={19}>
                <Cell $w={75} htmlFor="ribs">Rozstaw żeber</Cell>
                <NumField id="ribs" defaultValue="0" disabled />
                <Unit $w={56}>m</Unit>
                <Cell $w={93} htmlFor="deflection">Ugięcie graniczne</Cell>
                <NumField id="deflection" defaultValue="350" />
              </Row>
            </div>
            <LoadKind>
              <legend>Obciążenie belki między stężeniami</legend>
              <Row $h={22}><Radio name="load" label="moment stały lub zmienny liniowo" w={185} /></Row>
              <Row $h={22}><Radio name="load" label="obciążenie równomiernie rozłożone" on w={185} /></Row>
              <Row $h={22}><Radio name="load" label="siła skupiona" w={185} /></Row>
            </LoadKind>
          </Lower>
        </SpanPage>
        <SpanTabs>
          <SpanTab type="button" $w={59} $on>Przęsło 1</SpanTab>
          <SpanTab type="button" $w={56}>Przęsło 2</SpanTab>
        </SpanTabs>
      </Page>
    </Dialog>
  );
}

function BeamView() {
  return (
    <View3D>
      <h2>Widok 3D</h2>
      <svg viewBox="0 0 476 279" role="img" aria-label="Widok 3D">
        <defs>
          <linearGradient id="cone" x1="0.6" y1="0" x2="0.35" y2="1">
            <stop offset="0.45" stopColor="#0000ff" />
            <stop offset="0.75" stopColor="#000080" />
          </linearGradient>
        </defs>
        <path d="M234.500 0V279M0 161L389 140.500M186 132.500L234 149M340 184L394 203" stroke="#f6f57e" shapeRendering="crispEdges" />
        <path d="M229 143H241L351 174L334 176Z" fill="#969696" />
        <path d="M229 154H236L340 192L350 193L339 195L332 196Z" fill="#969696" />
        <path d="M234 145L334 176L342 174V194L336 192L234 155Z" fill="#2a2a2a" />
        <path d="M342.500 175V194" stroke="#969696" />
        <path d="M445 219L405 190C397 187 391 196 391 205C391 214 395 220 400 219.500Z" fill="url(#cone)" />
      </svg>
    </View3D>
  );
}

function LoadDiagram() {
  const posts = [119, 355, 591, 827, 1063];
  return (
    <Diagram viewBox="0 3 1192 333" role="img" aria-label="Schemat belki">
      <g shapeRendering="crispEdges">
        <path d="M89 142.500H1093" stroke="#000" />
        <path d="M118 205H1064" stroke="#000" strokeWidth="2" />
        {posts.map((x) => (
          <path key={x} d={`M${x} 143V205`} stroke="#000" strokeWidth="2" />
        ))}
        {posts.map((x) => (
          <path key={x} d={`M${x - 3} 201H${x + 3}V203H${x + 2}V205H${x - 2}V203H${x - 3}Z`} />
        ))}
        <path d="M355 143V231" stroke="#d20000" strokeWidth="2" />
        <path d="M352 228H358V230H357V232H356V234H354V232H352Z" fill="#d20000" />
        <rect x="119.500" y="260.500" width="944" height="23" fill="#c8c8c8" stroke="#000" />
        <path d="M591 261V284M1063 261V284" stroke="#000" strokeWidth="2" />
        <path d="M119.500 284V322M591.500 284V322M1063.500 284V322M119 322.500H1064" stroke="#000" />
        {[119, 591, 1063].map((x) => (
          <path key={x} d={`M${x} 287H${x + 2}L${x + 11} 297V299H${x - 10}V297Z`} />
        ))}
        {[591, 1063].map((x) => (
          <rect key={x} x={x - 10} y="301" width="21" height="4" />
        ))}
      </g>
      <path d="M107 307l5-6M113 307l5-6M119 307l5-6M125 307l5-6" stroke="#000" strokeWidth="1.500" />
      <path d="M124 320l-4 2.500 4 2.500M587 320l4 2.500-4 2.500M596 320l-4 2.500 4 2.500M1059 320l4 2.500-4 2.500" fill="none" stroke="#000" />
      <path d="M826 142L810 111C820 101 838 100 851 107M848 109.500H856L852 104Z" fill="none" stroke="#b01818" />
      <text x="139" y="316">8.000</text>
      <text x="611" y="316">8.000</text>
    </Diagram>
  );
}

const menu = [
  ['', 'P', 'rojekt'],
  ['', 'E', 'lementy'],
  ['', 'W', 'idok'],
  ['', 'O', 'kna'],
  ['', 'N', 'arzędzia'],
  ['Pomo', 'c', ''],
];

const tools = [
  ['new', 'open', 'folder'],
  ['save', 'remove'],
  ['select'],
  ['pack'],
  ['docGear', 'gearSave', 'gearRemove'],
  ['calc', 'print'],
  ['help', 'info'],
];

function App() {
  const [filter, setFilter] = useState('wszystkie');

  return (
    <Frame>
      <GlobalStyle />
      <TitleBar>
        <LogoBox>
          <svg width="14" height="15" viewBox="0 0 14 15" aria-hidden="true">
            <path d="M8 0L1 7.500L8 15V11L5 7.500L8 4Z" fill="#2f6fd0" />
            <path d="M9 4L12.500 7.500L9 11L6 7.500Z" fill="#f0913c" />
          </svg>
        </LogoBox>
        <TitleText>Konstruktor 5.0 - Licencja dla: INTERsoft - [belka stalowa]</TitleText>
        <Captions>
          <CaptionButton type="button" aria-label="Minimalizuj">
            <svg width="12" height="10" viewBox="0 0 12 10"><rect x="0.5" y="5.500" width="11" height="3" fill="#fff" stroke="#4a4a52" /></svg>
          </CaptionButton>
          <CaptionButton type="button" aria-label="Maksymalizuj">
            <svg width="12" height="10" viewBox="0 0 12 10"><path d="M0.500 0.500h11v9h-11zM3.500 3.500h5v3h-5z" fill="#fff" fillRule="evenodd" stroke="#4a4a52" /></svg>
          </CaptionButton>
          <CaptionButton type="button" aria-label="Zamknij" $close>
            <svg width="12" height="10" viewBox="0 0 12 10"><path d="M1 0.500h3l2 2.500 2-2.500h3l-3 4.500 3 4.500h-3l-2-2.500-2 2.500h-3l3-4.500z" fill="#fff" stroke="#5a3a3a" strokeWidth="0.8" /></svg>
          </CaptionButton>
        </Captions>
      </TitleBar>

      <Client>
        <TopArea>
          <MenuBar>
            <Grip $h={14} />
            {menu.map(([before, key, after]) => (
              <MenuItem type="button" key={before + key + after}>
                {before}<u>{key}</u>{after}
              </MenuItem>
            ))}
            <MdiButtons>
              <MdiButton type="button" aria-label="Minimalizuj okno">
                <svg width="10" height="10" viewBox="0 0 10 10"><path d="M1 9h7" stroke="#000" strokeWidth="2" /></svg>
              </MdiButton>
              <MdiButton type="button" aria-label="Przywróć okno">
                <svg width="10" height="10" viewBox="0 0 10 10"><path d="M3 4V1.500H9.500V6H7M0.500 4.500H6.500V9.500H0.500ZM0.500 5H6.500M3 2H9" fill="none" stroke="#000" /></svg>
              </MdiButton>
              <MdiButton type="button" aria-label="Zamknij okno">
                <svg width="10" height="10" viewBox="0 0 10 10"><path d="M1.500 1.500l7 7M8.500 1.500l-7 7" stroke="#000" strokeWidth="2" /></svg>
              </MdiButton>
            </MdiButtons>
          </MenuBar>
          <ToolRow>
            <ToolStrip $h={40}>
              <Grip $h={30} />
              {tools.map((group, g) => (
                <React.Fragment key={g}>
                  {g > 0 && <ToolSep $h={30} />}
                  {group.map((name) => (
                    <ToolButton type="button" key={name} aria-label={name}>
                      <ToolIcon name={name} />
                    </ToolButton>
                  ))}
                </React.Fragment>
              ))}
            </ToolStrip>
          </ToolRow>
        </TopArea>

        <Main>
          <Sidebar>
            <PanelHead>
              <DragLines />
              <MiniButton type="button" aria-label="Dokuj"><MiniGlyph name="max" /></MiniButton>
              <MiniButton type="button" aria-label="Zamknij panel"><MiniGlyph name="close" /></MiniButton>
            </PanelHead>
            <TreeBox>
              <Tree />
              <ScrollBar>
                <Arrow dir="up" />
                <Space $grow={93} />
                <Thumb $grow={212}>
                  <svg width="8" height="8" viewBox="0 0 8 8"><path d="M0 1.500h8M0 4.500h8M0 7.500h8" stroke="#555" /></svg>
                </Thumb>
                <Space $grow={319} />
                <Arrow dir="down" />
              </ScrollBar>
              <ScrollBar $row>
                <Arrow dir="left" />
                <Space $grow={2} />
                <Thumb $row $grow={132}>
                  <svg width="8" height="8" viewBox="0 0 8 8"><path d="M1.500 0v8M4.500 0v8M7.500 0v8" stroke="#555" /></svg>
                </Thumb>
                <Space $grow={81} />
                <Arrow dir="right" />
              </ScrollBar>
              <ScrollBar />
            </TreeBox>
          </Sidebar>

          <Work>
            <SubTools>
              <ToolStrip $h={32}>
                <Grip $h={24} />
                <FlagButton type="button" $on aria-label="Formularz">
                  <svg width="24" height="22" viewBox="0 0 24 22">
                    <rect x="1.500" y="1.500" width="21" height="19" rx="1" fill="#d3dcf0" stroke="#5870b0" />
                    <rect x="2" y="2" width="20" height="4" fill="#6d87c4" />
                    <path d="M5 9.500h5M5 13.500h3M12.500 8.500h7v3h-7zM9.500 12.500h10v3h-10zM5 17.500h14" fill="none" stroke="#7388bd" />
                  </svg>
                </FlagButton>
                <FlagButton type="button" $on aria-label="Widok 3D">
                  <svg width="24" height="24" viewBox="0 0 24 24">
                    <path d="M3 3L13 1L22 4L20 19L12 23L3 18Z" fill="#c3cad8" stroke="#8d97ab" />
                    <path d="M3 3L12 6L22 4M12 6V23" fill="none" stroke="#fff" />
                    <text x="12" y="17" textAnchor="middle" fontFamily="Liberation Sans" fontWeight="700" fontSize="13">3D</text>
                  </svg>
                </FlagButton>
                <ToolSep $h={24} />
                <FlagButton type="button" aria-label="Obciążenia">
                  <svg width="24" height="24" viewBox="0 0 24 24">
                    <path d="M3 18L8 15H22L18 21H4Z" fill="#aab4bd" stroke="#6b7680" />
                    <path d="M7 3v12M3 12l4 5 4-5" fill="none" stroke="#2f9a44" strokeWidth="2" />
                    <path d="M10 4h12M10 9h12M10 14h12M13 1l-3 3 3 3M13 6l-3 3 3 3M13 11l-3 3 3 3" fill="none" stroke="#1d3f94" strokeWidth="1.600" />
                  </svg>
                </FlagButton>
                <ToolSep $h={24} />
                <FilterCombo>
                  <select aria-label="Filtr obciążeń" value={filter} onChange={(e) => setFilter(e.target.value)}>
                    <option>wszystkie</option>
                  </select>
                  <svg width="5" height="3" viewBox="0 0 5 3"><path d="M0 0h5l-2.500 3z" /></svg>
                </FilterCombo>
              </ToolStrip>
            </SubTools>
            <Canvas>
              <Floating>
                <BeamDialog />
                <BeamView />
              </Floating>
              <LoadDiagram />
            </Canvas>
          </Work>
        </Main>

        <Output>
          <OutputSide>
            <MiniButton type="button" aria-label="Zamknij komunikaty"><MiniGlyph name="close" /></MiniButton>
            <MiniButton type="button" aria-label="Powiększ komunikaty"><MiniGlyph name="max" /></MiniButton>
          </OutputSide>
          <Log>
            <LogLines>
              <p>Zakończono generowanie części raportu - Przemieszczenia</p>
              <p>Zakończono generowanie części raportu - Reakcje</p>
              <p>Zakończono generowanie części raportu - Wyniki wymiarowania</p>
              <p>Zakończono obliczenia</p>
            </LogLines>
            <ScrollBar>
              <Arrow dir="up" />
              <Space $grow={10} />
              <Thumb $grow={15} />
              <Space $grow={2} />
              <Arrow dir="down" />
            </ScrollBar>
          </Log>
        </Output>

        <Status>
          <p>Aby uzyskać pomoc naciśnij F1</p>
          <Pane $w={29} />
          <Pane $w={35}>NUM</Pane>
          <Pane $w={33} />
          <svg width="18" height="17" viewBox="0 0 18 17" aria-hidden="true">
            <rect width="18" height="17" fill="#f0f0f0" />
            <path d="M6 17L18 5M10 17L18 9M14 17L18 13" stroke="#8c8c8c" strokeWidth="1.500" />
          </svg>
        </Status>
      </Client>
    </Frame>
  );
}

export default App;
